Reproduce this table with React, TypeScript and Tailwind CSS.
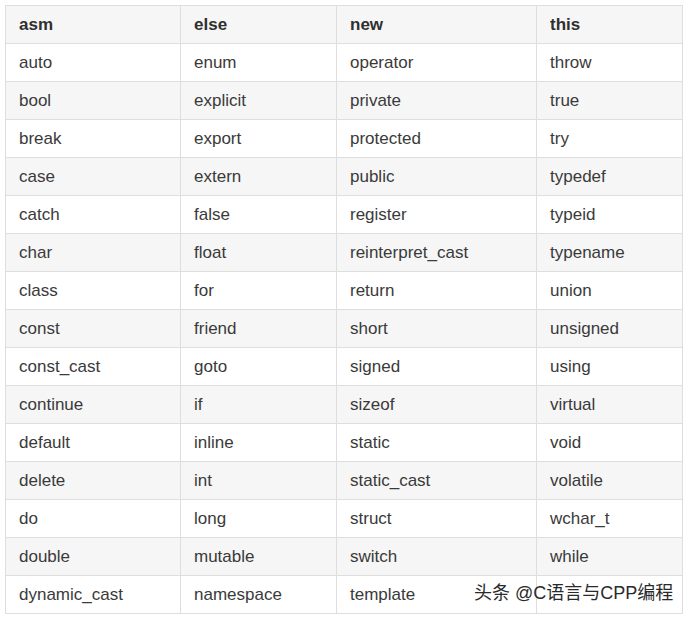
import React from 'react';

const rows: string[][] = [
  ['auto', 'enum', 'operator', 'throw'],
  ['bool', 'explicit', 'private', 'true'],
  ['break', 'export', 'protected', 'try'],
  ['case', 'extern', 'public', 'typedef'],
  ['catch', 'false', 'register', 'typeid'],
  ['char', 'float', 'reinterpret_cast', 'typename'],
  ['class', 'for', 'return', 'union'],
  ['const', 'friend', 'short', 'unsigned'],
  ['const_cast', 'goto', 'signed', 'using'],
  ['continue', 'if', 'sizeof', 'virtual'],
  ['default', 'inline', 'static', 'void'],
  ['delete', 'int', 'static_cast', 'volatile'],
  ['do', 'long', 'struct', 'wchar_t'],
  ['double', 'mutable', 'switch', 'while'],
  ['dynamic_cast', 'namespace', 'template', ''],
];

const header = ['asm', 'else', 'new', 'this'];
const widths = ['w-[175px]', 'w-[156px]', 'w-[200px]', 'w-[146px]'];

export default function App() {
  return (
    <div className="w-[688px] h-[617px] bg-white p-[5px] relative font-['Liberation_Sans',Arial,sans-serif] text-[#3a3a3a]">
      <table className="border-collapse table-fixed w-[677px] text-[17px]">
        <colgroup>
          {widths.map((w, i) => (
            <col key={i} className={w} />
          ))}
        </colgroup>
        <thead>
          <tr className="bg-[#f6f6f6] h-[38px]">
            {header.map((h) => (
              <th key={h} className="border border-[#dedede] text-left font-bold text-[#2f2f2f] px-[13px] py-0">
                {h}
              </th>
            ))}
          </tr>
        </thead>
        <tbody>
          {rows.map((r, i) => (
            <tr key={i} className={`h-[38px] ${i % 2 === 1 ? 'bg-[#f6f6f6]' : 'bg-white'}`}>
              {r.map((c, j) => (
                <td key={j} className="border border-[#dedede] px-[13px] py-0">
                  {c}
                </td>
              ))}
            </tr>
          ))}
        </tbody>
      </table>

      {/* watermark */}
      <div className="absolute left-[474px] top-[582px] text-[18px] text-[#2a2a2a] font-['Liberation_Sans','Noto_Sans_CJK_SC',sans-serif] leading-[22px] whitespace-nowrap">
        头条 @C语言与CPP编程
      </div>
    </div>
  );
}
